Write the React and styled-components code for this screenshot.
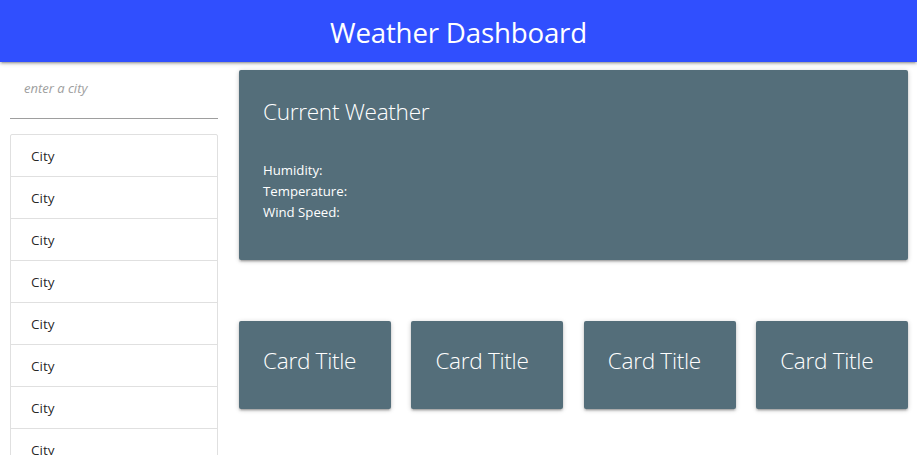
import React from "react";
import styled, { createGlobalStyle } from "styled-components";

const GlobalStyle = createGlobalStyle`
  html, body {
    margin: 0;
    padding: 0;
    background: #fff;
    font-family: "Open Sans", "Noto Sans", sans-serif;
    font-size: 14px;
    color: rgba(0, 0, 0, 0.87);
  }
  * {
    box-sizing: border-box;
  }
`;

const Header = styled.header`
  height: 62px;
  background: #304ffe;
  display: flex;
  align-items: center;
  justify-content: center;
  box-shadow: 0 2px 2px 0 rgba(0, 0, 0, 0.14), 0 3px 1px -2px rgba(0, 0, 0, 0.12),
    0 1px 5px 0 rgba(0, 0, 0, 0.2);
  position: relative;
  z-index: 1;
`;

const HeaderTitle = styled.h1`
  margin: 0;
  color: #fff;
  font-size: 27.7px;
  font-weight: 400;
  letter-spacing: -0.2px;
  transform: translateY(1px);
`;

const Row = styled.div`
  display: flex;
`;

const Sidebar = styled.aside`
  width: 228px;
  flex: none;
  padding: 0 10px;
`;

const Main = styled.main`
  flex: 1;
  min-width: 0;
  padding: 0 9px 0 11px;
`;

const Search = styled.input`
  display: block;
  width: 100%;
  height: 48px;
  margin: 9px 0 0;
  padding: 0 14px 14px;
  border: none;
  border-bottom: 1px solid #9e9e9e;
  outline: none;
  font-family: inherit;
  font-size: 13px;
  background: transparent;
  &::placeholder {
    color: #9e9e9e;
    font-style: italic;
  }
`;

const Collection = styled.ul`
  list-style: none;
  margin: 15px 0 16px;
  padding: 0;
  border: 1px solid #e0e0e0;
  border-radius: 2px;
`;

const CollectionItem = styled.li`
  padding: 11px 20px 9px;
  line-height: 21px;
  font-size: 13.5px;
  color: rgba(0, 0, 0, 0.87);
  border-bottom: 1px solid #e0e0e0;
`;

const Card = styled.div`
  background: #546e7a;
  color: #fff;
  border-radius: 2px;
  padding: 24px;
  box-shadow: 0 2px 2px 0 rgba(0, 0, 0, 0.14), 0 3px 1px -2px rgba(0, 0, 0, 0.12),
    0 1px 5px 0 rgba(0, 0, 0, 0.2);
`;

const WeatherCard = styled(Card)`
  margin-top: 8px;
  padding-top: 26px;
  height: 190px;
`;

const CardTitle = styled.span`
  display: block;
  font-size: 22.6px;
  font-weight: 300;
  line-height: 32px;
  letter-spacing: -0.3px;
  margin-bottom: 8px;
`;

const Stats = styled.div`
  margin-top: 32px;
  font-size: 13.2px;
  line-height: 21px;
`;

const CardRow = styled.div`
  display: grid;
  grid-template-columns: repeat(4, 1fr);
  column-gap: 20.5px;
  margin-top: 61px;
`;

const cities = Array.from({ length: 10 }, () => "City");

export default function App() {
  return (
    <>
      <GlobalStyle />
      <Header>
        <HeaderTitle>Weather Dashboard</HeaderTitle>
      </Header>
      <Row>
        <Sidebar>
          <Search placeholder="enter a city" />
          <Collection>
            {cities.map((c, i) => (
              <CollectionItem key={i}>{c}</CollectionItem>
            ))}
          </Collection>
        </Sidebar>
        <Main>
          <WeatherCard>
            <CardTitle>Current Weather</CardTitle>
            <Stats>
              <div>Humidity:</div>
              <div>Temperature:</div>
              <div>Wind Speed:</div>
            </Stats>
          </WeatherCard>
          <CardRow>
            {[0, 1, 2, 3].map((i) => (
              <Card key={i}>
                <CardTitle>Card Title</CardTitle>
              </Card>
            ))}
          </CardRow>
        </Main>
      </Row>
    </>
  );
}
